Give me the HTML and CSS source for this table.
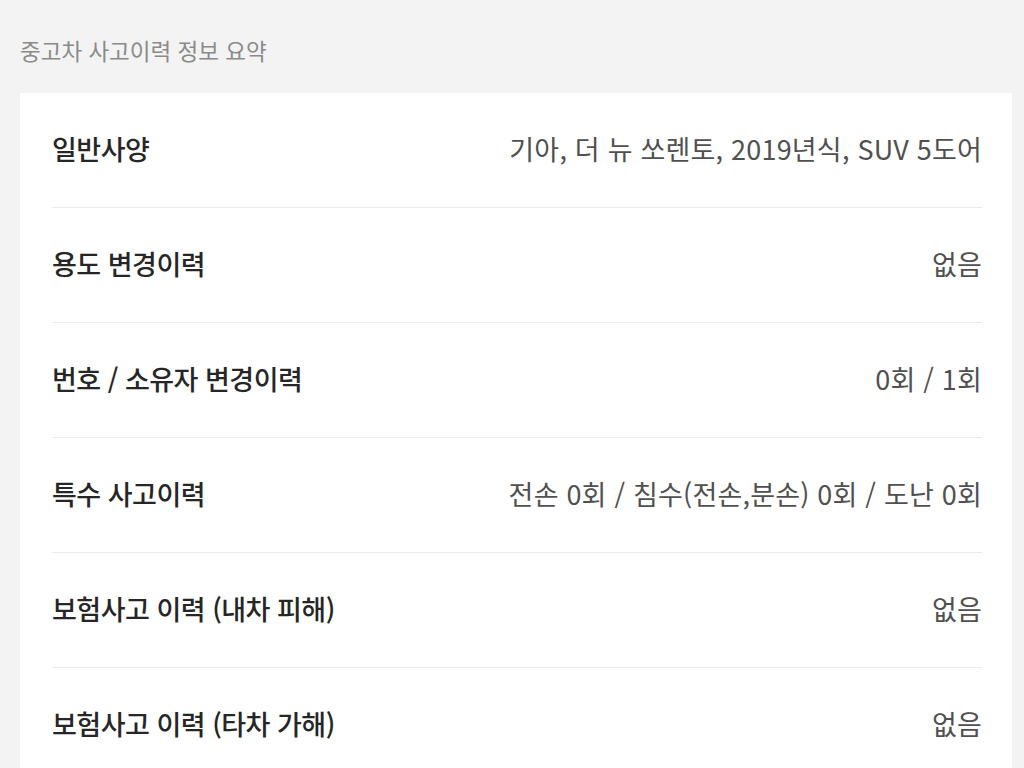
FILE: index.html
```html
<!DOCTYPE html>
<html lang="ko">
<head>
<meta charset="utf-8">
<title>중고차 사고이력 정보 요약</title>
<link rel="stylesheet" href="styles.css">
</head>
<body>
<main class="page">
  <h2 class="title">중고차 사고이력 정보 요약</h2>
  <section class="card">
    <div class="row"><span class="label">일반사양</span><span class="value">기아, 더 뉴 쏘렌토, 2019년식, SUV 5도어</span></div>
    <div class="row"><span class="label">용도 변경이력</span><span class="value">없음</span></div>
    <div class="row"><span class="label">번호 / 소유자 변경이력</span><span class="value">0회 / 1회</span></div>
    <div class="row"><span class="label">특수 사고이력</span><span class="value">전손 0회 / 침수(전손,분손) 0회 / 도난 0회</span></div>
    <div class="row"><span class="label">보험사고 이력 (내차 피해)</span><span class="value">없음</span></div>
    <div class="row"><span class="label">보험사고 이력 (타차 가해)</span><span class="value">없음</span></div>
  </section>
</main>
</body>
</html>
```

FILE: styles.css
```css
* { box-sizing: border-box; }
html, body {
  margin: 0;
  padding: 0;
  background: #f3f3f3;
  font-family: "Noto Sans CJK KR", "Noto Sans", sans-serif;
  overflow: hidden;
}
.page {
  padding: 30px 12px 0 20px;
}
.title {
  margin: 0;
  height: 63px;
  font-size: 22.5px;
  font-weight: 400;
  color: #8a8a8a;
  letter-spacing: 0;
  line-height: 40px;
}
.card {
  background: #fff;
  padding: 0 30px 0 32px;
}
.row {
  display: flex;
  justify-content: space-between;
  align-items: center;
  height: 115px;
  padding-bottom: 3px;
  border-bottom: 1px solid #ebebeb;
}
.label {
  font-size: 27px;
  font-weight: 500;
  color: #262626;
  letter-spacing: -0.5px;
}
.value {
  font-size: 27px;
  font-weight: 400;
  color: #505050;
  letter-spacing: 0.2px;
}
```
